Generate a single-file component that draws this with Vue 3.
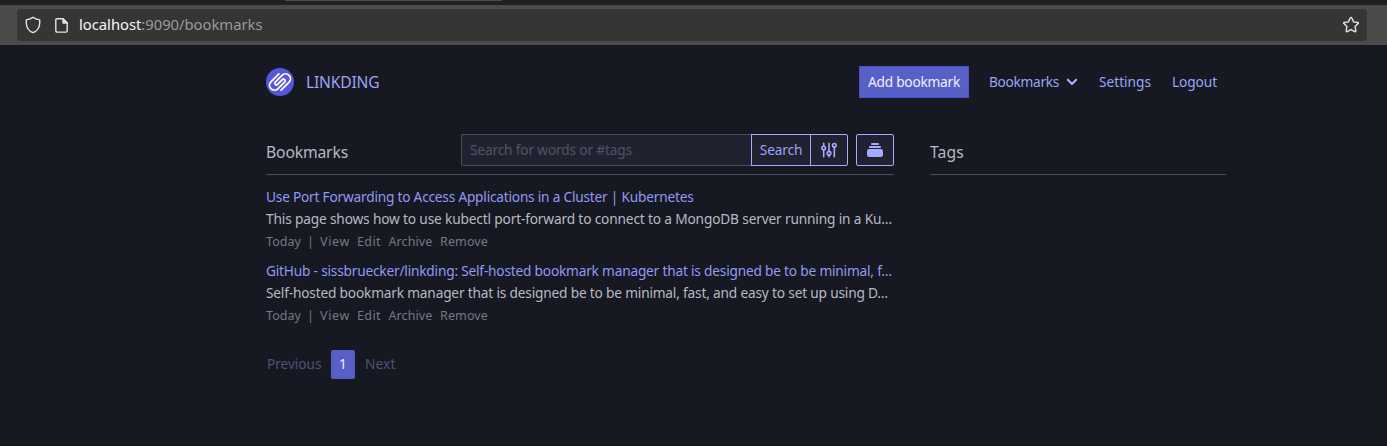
<script setup>
const bookmarks = [
  {
    title: 'Use Port Forwarding to Access Applications in a Cluster | Kubernetes',
    titleWidth: 427.5,
    description: 'This page shows how to use kubectl port-forward to connect to a MongoDB server running in a Ku…',
    descriptionWidth: 626,
  },
  {
    title: 'GitHub - sissbruecker/linkding: Self-hosted bookmark manager that is designed be to be minimal, f…',
    titleWidth: 626,
    description: 'Self-hosted bookmark manager that is designed be to be minimal, fast, and easy to set up using D…',
    descriptionWidth: 622,
  },
]

// Tracks a text run so that it occupies the given width in pixels.
const vFit = {
  mounted(el, { value }) {
    const natural = el.getBoundingClientRect().width
    const count = [...el.textContent].length
    el.style.letterSpacing = `${(value - natural) / count}px`
  },
}
</script>

<template>
  <div class="page">
    <div class="tabs"><div class="active-tab"></div></div>
    <div class="toolbar">
      <div class="address">
        <svg class="shield" width="16" height="18" viewBox="0 0 16 18" fill="none" stroke="#e4e4e4" stroke-width="1.4" stroke-linejoin="round">
          <path d="M8 1.2 C6.6 2.5 4 3.5 1.3 3.9 V7.2 C1.5 11.8 4.2 15.1 8 16.7 C11.8 15.1 14.5 11.8 14.7 7.2 V3.9 C12 3.5 9.4 2.5 8 1.2Z" />
        </svg>
        <svg class="file" width="13" height="15" viewBox="0 0 13 15" fill="none" stroke="#e4e4e4" stroke-width="1.4" stroke-linejoin="round">
          <path d="M2 .8 H8 L12.2 5 V12.8 Q12.2 14.1 11 14.1 H2 Q.8 14.1 .8 12.8 V2 Q.8 .8 2 .8Z" />
          <path d="M8 .8 V5 H12.2Z" fill="#e4e4e4" />
        </svg>
        <span v-fit="183.5" class="url"><b>localhost</b>:9090/bookmarks</span>
        <svg class="star" width="18" height="18" viewBox="0 0 18 18" fill="none" stroke="#e4e4e4" stroke-width="1.4" stroke-linejoin="round">
          <path d="M9 1.4 Q9.5 1.4 9.8 2 L11.6 5.9 L15.8 6.5 Q16.8 6.8 16.1 7.6 L13.1 10.6 L13.8 15 Q13.8 16.2 12.8 15.7 L9 13.7 L5.2 15.7 Q4.2 16.2 4.2 15 L4.9 10.6 L1.9 7.6 Q1.2 6.8 2.2 6.5 L6.4 5.9 L8.2 2 Q8.5 1.4 9 1.4Z" />
        </svg>
      </div>
    </div>

    <div class="container">
      <header>
        <a class="brand">
          <svg width="28" height="28" viewBox="0 0 28 28">
            <circle cx="14" cy="14" r="14" fill="#5755dc" />
            <path
              d="M12.9 5.9 L4.9 13.9 A4.88 4.88 0 0 0 11.8 20.8 L18.8 13.8 A1.63 1.63 0 0 0 16.5 11.5 L11.5 16.5 A1.63 1.63 0 0 1 9.2 14.2 L16.2 7.2 A4.88 4.88 0 0 1 23.1 14.1 L15.1 22.1"
              fill="none" stroke="#fff" stroke-width="1.8" stroke-linecap="round" stroke-linejoin="round"
            />
          </svg>
          <span v-fit="73.5" class="brand-name">LINKDING</span>
        </a>
        <nav>
          <a class="add"><span v-fit="92">Add bookmark</span></a>
          <a class="menu">
            <span v-fit="70">Bookmarks</span>
            <svg width="12" height="8" viewBox="0 0 12 8" fill="none" stroke="#a5aaff" stroke-width="2.1" stroke-linecap="round" stroke-linejoin="round"><path d="M1.8 1.7 L6 5.9 L10.2 1.7" /></svg>
          </a>
          <a class="settings"><span v-fit="52">Settings</span></a>
          <a class="logout"><span v-fit="45">Logout</span></a>
        </nav>
      </header>

      <main>
        <section>
          <div class="section-head">
            <h2><span v-fit="82">Bookmarks</span></h2>
            <div class="search">
              <div class="field"><span v-fit="162">Search for words or #tags</span></div>
              <button class="go"><span v-fit="42.5">Search</span></button>
              <button class="filters">
                <svg width="16" height="16" viewBox="0 0 16 16" fill="none" stroke="#a5aaff" stroke-width="1.6" stroke-linecap="round">
                  <circle cx="2.7" cy="6" r="1.8" /><circle cx="8" cy="11.2" r="1.8" /><circle cx="13.3" cy="3.3" r="1.8" />
                  <path d="M2.7 1.2V4.2M2.7 7.8V14.8M8 1.2V9.4M8 13V14.8M13.3 5.1V14.8" />
                </svg>
              </button>
            </div>
            <button class="bulk">
              <svg width="16" height="14" viewBox="0 0 16 14" fill="#a5aaff">
                <rect x="4" y="0" width="8" height="2" rx=".8" />
                <rect x="2" y="3" width="12" height="2" rx=".8" />
                <rect x="0" y="6" width="16" height="8" rx="2.2" />
              </svg>
            </button>
          </div>
          <ul>
            <li v-for="b in bookmarks" :key="b.title">
              <div class="title"><span v-fit="b.titleWidth">{{ b.title }}</span></div>
              <div class="description"><span v-fit="b.descriptionWidth">{{ b.description }}</span></div>
              <div class="actions">
                <span class="today"><span v-fit="35">Today</span></span>
                <span class="bar">|</span>
                <span class="view"><span v-fit="30">View</span></span>
                <span class="edit"><span v-fit="24">Edit</span></span>
                <span class="archive"><span v-fit="44">Archive</span></span>
                <span><span v-fit="48">Remove</span></span>
              </div>
            </li>
          </ul>
          <div class="pagination">
            <span class="prev"><span v-fit="54.5">Previous</span></span>
            <span class="current">1</span>
            <span class="next"><span v-fit="30.5">Next</span></span>
          </div>
        </section>
        <aside>
          <div class="section-head">
            <h2><span v-fit="34">Tags</span></h2>
          </div>
        </aside>
      </main>
    </div>
  </div>
</template>

<style>
body {
  background: #161922;
  overflow: hidden;
}
</style>

<style scoped>
.page {
  box-sizing: border-box;
  height: 446px;
  background: #161922;
  border-bottom: 1px solid #10121a;
  font: 13.7px/22px "Noto Sans", "Open Sans", sans-serif;
  color: #b7bac2;
  white-space: nowrap;
  overflow: hidden;
}
.tabs {
  height: 5px;
  background: #212121;
}
.active-tab {
  width: 217px;
  height: 1px;
  margin-left: 285px;
  background: #4b4b4b;
}
.toolbar {
  box-sizing: border-box;
  height: 40px;
  padding: 4px 20px 4px 17px;
  background: #4b4b4b;
}
.address {
  box-sizing: border-box;
  display: flex;
  align-items: center;
  height: 32px;
  padding: 0 7px 0 8px;
  border-radius: 4px;
  background: #353535;
}
.file { margin-left: 14px; }
.url {
  margin-left: 11px;
  padding-bottom: 2px;
  font-size: 14.8px;
  color: #9a9a9a;
}
.url b { font-weight: 400; color: #f5f5f5; }
.star { margin-left: auto; }
.container {
  width: 960px;
  margin-left: 266px;
  padding-top: 21px;
}
header {
  display: flex;
  justify-content: space-between;
  align-items: center;
  height: 32px;
  color: #9ca2f8;
}
.brand {
  display: flex;
  align-items: center;
  gap: 12px;
}
.brand-name { font-size: 15.6px; }
nav {
  display: flex;
  align-items: center;
  padding-right: 9px;
}
.add {
  box-sizing: border-box;
  width: 110px;
  height: 32px;
  padding: 4px 8px;
  border: 1px solid #4a50d0;
  background: #5860c8;
  color: #eff0ff;
}
.menu {
  display: flex;
  align-items: center;
  gap: 7px;
  margin-left: 20px;
}
.settings { margin-left: 21px; }
.logout { margin-left: 21px; }
main {
  display: grid;
  grid-template-columns: 628px 296px;
  gap: 36px;
  margin-top: 36px;
}
.section-head {
  box-sizing: border-box;
  display: flex;
  height: 41px;
  border-bottom: 1px solid #4b4e57;
}
h2 {
  margin: 7px auto 0 0;
  font-size: 15.7px;
  line-height: 22px;
  font-weight: 400;
}
.search { display: flex; }
.field {
  box-sizing: border-box;
  width: 290px;
  height: 32px;
  padding: 4px 8px;
  border: 1px solid #4b4e57;
  border-right: 0;
  border-radius: 2px 0 0 2px;
  background: #20232f;
  color: #4f5466;
}
button {
  box-sizing: border-box;
  height: 32px;
  padding: 0;
  display: flex;
  align-items: center;
  justify-content: center;
  border: 1px solid #a5aaff;
  background: #20232f;
  color: #9ca2f8;
  font: inherit;
}
.go { width: 60px; }
.filters {
  width: 38px;
  margin-left: -1px;
  border-radius: 0 2px 2px 0;
}
.bulk {
  width: 38px;
  margin-left: 8px;
  border-radius: 2px;
}
ul {
  list-style: none;
  margin: 11px 0 0;
  padding: 0;
}
li { height: 74px; }
.title { color: #9298f5; }
.actions {
  display: flex;
  font-size: 12.5px;
  line-height: 24px;
  color: #737885;
}
.today { width: 41px; }
.bar { width: 13px; }
.view { width: 37px; }
.edit { width: 31.5px; }
.archive { width: 51.5px; }
.pagination {
  display: flex;
  align-items: center;
  height: 29px;
  margin-top: 16px;
  line-height: 27px;
  color: #4d5276;
}
.prev {
  width: 64px;
  padding-left: 1px;
}
.current {
  width: 24px;
  height: 29px;
  text-align: center;
  border-radius: 2px;
  background: #5860c8;
  color: #eff0ff;
}
.prev,
.next { height: 29px; }
.next { margin-left: 10px; }
</style>
